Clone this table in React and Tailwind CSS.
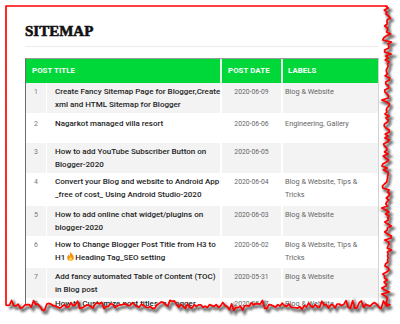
import React from 'react';

// deterministic jitter for the torn paper edge
function rnd(i) {
  const s = Math.sin(i * 12.9898 + 78.233) * 43758.5453;
  return s - Math.floor(s);
}

function tornEdge() {
  const pts = [];
  let i = 0;
  for (let y = 6; y <= 306; y += 2) {
    const spike = rnd(i + 900) > 0.8 ? -3 : rnd(i + 900) < 0.1 ? 2 : 0;
    pts.push([387 + (rnd(i) - 0.5) * 5 + spike, y]);
    i++;
  }
  for (let x = 390; x >= 6; x -= 2.2) {
    const spike = rnd(i + 900) > 0.8 ? -3.5 : rnd(i + 900) < 0.1 ? 2 : 0;
    pts.push([x, 306 + (rnd(i) - 0.5) * 5 + spike]);
    i++;
  }
  return pts;
}

function Frame() {
  const edge = tornEdge();
  const jag = edge.map(([x, y]) => `${x.toFixed(1)},${y.toFixed(1)}`).join(' L');
  const outline = `M6,305 L6,6 L387,6 L${jag} Z`;
  const shadow = `M${edge.map(([x, y]) => `${(x + 2).toFixed(1)},${(y + 2.5).toFixed(1)}`).join(' L')}`;
  return (
    <svg className="absolute inset-0 pointer-events-none" width="400" height="324" viewBox="0 0 400 324">
      <defs>
        <filter id="blur" x="-10%" y="-10%" width="120%" height="120%">
          <feGaussianBlur stdDeviation="1" />
        </filter>
      </defs>
      <path d={`M0,0 H400 V324 H0 Z ${outline}`} fill="#fff" fillRule="evenodd" />
      <path d={shadow} fill="none" stroke="#444" strokeWidth="3" opacity="0.75" filter="url(#blur)" />
      <path d={outline} fill="none" stroke="#ff0000" strokeWidth="1.7" strokeLinejoin="round" />
    </svg>
  );
}

function Flame() {
  return (
    <svg className="inline-block align-[-1px] mr-[1px]" width="7" height="9" viewBox="0 0 7 9">
      <path d="M3.6 0 C4.2 1.8 6.8 3 6.8 5.6 C6.8 7.6 5.3 9 3.5 9 C1.6 9 0.2 7.6 0.2 5.8 C0.2 4.2 1.2 3.2 1.8 2.6 C1.9 3.6 2.3 4.2 2.8 4.4 C2.6 2.8 3 1.2 3.6 0 Z" fill="#f4900c" />
      <path d="M3.5 4.6 C4.3 5.6 5.2 6.2 5.2 7.3 C5.2 8.3 4.4 8.9 3.5 8.9 C2.6 8.9 1.8 8.3 1.8 7.4 C1.8 6.4 2.9 5.8 3.5 4.6 Z" fill="#ffcc4d" />
    </svg>
  );
}

const rows = [
  { n: 1, title: ['Create Fancy Sitemap Page for Blogger,Create', 'xml and HTML Sitemap for Blogger'], date: '2020-06-09', labels: ['Blog & Website'], h: 'h-[30px]' },
  { n: 2, title: ['Nagarkot managed villa resort'], date: '2020-06-06', labels: ['Engineering, Gallery'], h: 'h-[30px]', pt: 'pt-[5px]' },
  { n: 3, title: ['How to add YouTube Subscriber Button on', 'Blogger-2020'], date: '2020-06-05', labels: [], h: 'h-[30px]' },
  { n: 4, title: ['Convert your Blog and website to Android App', '_free of cost_ Using Android Studio-2020'], date: '2020-06-04', labels: ['Blog & Website, Tips &', 'Tricks'], h: 'h-[33px]' },
  { n: 5, title: ['How to add online chat widget/plugins on', 'blogger-2020'], date: '2020-06-03', labels: ['Blog & Website'], h: 'h-[30px]' },
  { n: 6, title: ['How to Change Blogger Post Title from H3 to', <>H1 <Flame />Heading Tag_SEO setting</>], date: '2020-06-02', labels: ['Blog & Website, Tips &', 'Tricks'], h: 'h-[32px]' },
  { n: 7, title: ['Add fancy automated Table of Content (TOC)', 'in Blog post'], date: '2020-05-31', labels: ['Blog & Website'], h: 'h-[30px]' },
  { n: 8, title: ['How to Customize post titles in blogger'], date: '2020-05-27', labels: ['Blog & Website'], h: 'h-[30px]', pt: 'pt-0' },
];

export default function App() {
  return (
    <div className="relative w-[400px] h-[324px] overflow-hidden bg-white font-['Roboto','Liberation_Sans',sans-serif]">
      <div className="pl-[25px] pt-[22px]">
        <h2 className="font-['Liberation_Serif',serif] font-bold text-[15px] leading-[18px] text-[#111] [-webkit-text-stroke:0.6px_#111]">
          SITEMAP
        </h2>
        <div className="mt-[6px] w-[353px] h-px bg-[#ececec]" />

        <div className="mt-[11px] w-[354px] border-l border-t border-r border-l-[#6b6b6b] border-t-[#9a9a9a] border-r-[#d4d4d4]">
          <div className="flex h-[24px] bg-[#00d83a] text-white font-bold text-[7.8px] leading-[24px] tracking-[0.1px]">
            <div className="w-[196px] pl-[6px] border-r-2 border-[#e6fbe9]">POST TITLE</div>
            <div className="w-[61px] pl-[6px] border-r-2 border-[#e6fbe9]">POST DATE</div>
            <div className="flex-1 pl-[5px]">LABELS</div>
          </div>

          {rows.map((r, idx) => (
            <div key={r.n} className={`flex ${r.h} ${idx % 2 === 0 ? 'bg-[#f3f3f3]' : 'bg-white'}`}>
              <div className={`w-[21px] shrink-0 border-r border-white text-center text-[7px] leading-[12px] text-[#777] ${r.pt || 'pt-[3px]'}`}>
                {r.n}
              </div>
              <div className={`w-[175px] shrink-0 border-r-2 border-white pl-[8px] text-[8px] leading-[12.5px] font-medium text-[#1e1e1e] whitespace-nowrap ${r.pt || 'pt-[3px]'}`}>
                {r.title.map((t, i) => (
                  <div key={i}>{t}</div>
                ))}
              </div>
              <div className={`w-[61px] shrink-0 border-r-2 border-white text-center text-[6.8px] leading-[12px] text-[#666] ${r.pt || 'pt-[3px]'}`}>
                {r.date}
              </div>
              <div className={`flex-1 pl-[2px] text-[7.3px] leading-[12.5px] text-[#666] whitespace-nowrap ${r.pt || 'pt-[3px]'}`}>
                {r.labels.map((l, i) => (
                  <div key={i}>{l}</div>
                ))}
              </div>
            </div>
          ))}
        </div>
      </div>
      <Frame />
    </div>
  );
}
